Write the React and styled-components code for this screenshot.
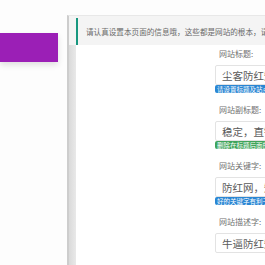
import React from 'react'
import styled, { createGlobalStyle } from 'styled-components'

const GlobalStyle = createGlobalStyle`
  body {
    margin: 0;
    background: #fdfdfd;
    font-family: "Noto Sans CJK SC", "Noto Sans", sans-serif;
    overflow: hidden;
  }
`;

const Page = styled.div`
  display: flex;
  width: 265px;
  height: 265px;
  overflow: hidden;
  background: #fdfdfd;
`;

const Sidebar = styled.div`
  width: 67px;
  flex-shrink: 0;
  padding-top: 33px;
  box-sizing: border-box;
`;

const MenuButton = styled.div`
  width: 58px;
  height: 29px;
  background: #9b1fb6;
  box-shadow: 0 3px 6px rgba(0, 0, 0, 0.12);
`;

const Panel = styled.div`
  flex: 1;
  min-width: 0;
  margin-top: 15px;
  display: flex;
  flex-direction: column;
  border-top: 1px solid #e8e8e8;
  border-left: 2px solid #cdcdcd;
  background: #fff;
`;

const Notice = styled.div`
  display: flex;
  align-items: center;
  gap: 8px;
  height: 41px;
  padding: 2px 0 0 7px;
  box-sizing: border-box;
  background: #f4f4f4;
  white-space: nowrap;
  overflow: hidden;
`;

const NoticeBar = styled.div`
  width: 2px;
  height: 28px;
  flex-shrink: 0;
  background: #17977f;
`;

const NoticeText = styled.span`
  font-size: 7.6px;
  color: #6a6a6a;
`;

const Body = styled.div`
  flex: 1;
  display: flex;
`;

const Rail = styled.div`
  width: 7px;
  flex-shrink: 0;
  background: linear-gradient(to right, #dadada, #e9e9e9);
`;

const Form = styled.div`
  margin-left: 139px;
  padding-top: 4px;
  width: 200px;
  flex-shrink: 0;
  display: flex;
  flex-direction: column;
`;

const Field = styled.div`
  display: flex;
  flex-direction: column;
  align-items: flex-start;
  margin-bottom: 12px;
`;

const Label = styled.div`
  font-size: 8px;
  line-height: 10px;
  color: #707070;
  padding-left: 4px;
  margin-bottom: 6px;
`;

const Input = styled.div`
  width: 100%;
  height: 20px;
  box-sizing: border-box;
  border: 1px solid #e3e3e3;
  border-radius: 2px;
  padding-left: 6px;
  display: flex;
  align-items: center;
  font-size: 10.5px;
  color: #5a5a5a;
  white-space: nowrap;
  overflow: hidden;
`;

const Badge = styled.span`
  height: 8px;
  padding: 0 2px;
  border-radius: 2px;
  font-size: 6.5px;
  line-height: 8px;
  color: #fff;
  white-space: nowrap;
  background: ${p => (p.$tone === 'green' ? '#3fa45a' : '#2a86d3')};
`;

const fields = [
  { label: '网站标题:', value: '尘客防红短网址', tip: '请设置标题及站点名称', tone: 'blue' },
  { label: '网站副标题:', value: '稳定，直链，安全', tip: '删除在标题后面的内容', tone: 'green' },
  { label: '网站关键字:', value: '防红网，短网址', tip: '好的关键字有利于优化', tone: 'blue' },
  { label: '网站描述字:', value: '牛逼防红短网址' },
];

const App = () => {
  return (
    <Page>
      <GlobalStyle />
      <Sidebar>
        <MenuButton />
      </Sidebar>
      <Panel>
        <Notice>
          <NoticeBar />
          <NoticeText>请认真设置本页面的信息哦，这些都是网站的根本，请谨慎填写</NoticeText>
        </Notice>
        <Body>
          <Rail />
          <Form>
            {fields.map(f => (
              <Field key={f.label}>
                <Label>{f.label}</Label>
                <Input>{f.value}</Input>
                {f.tip && <Badge $tone={f.tone}>{f.tip}</Badge>}
              </Field>
            ))}
          </Form>
        </Body>
      </Panel>
    </Page>
  )
}

export default App
